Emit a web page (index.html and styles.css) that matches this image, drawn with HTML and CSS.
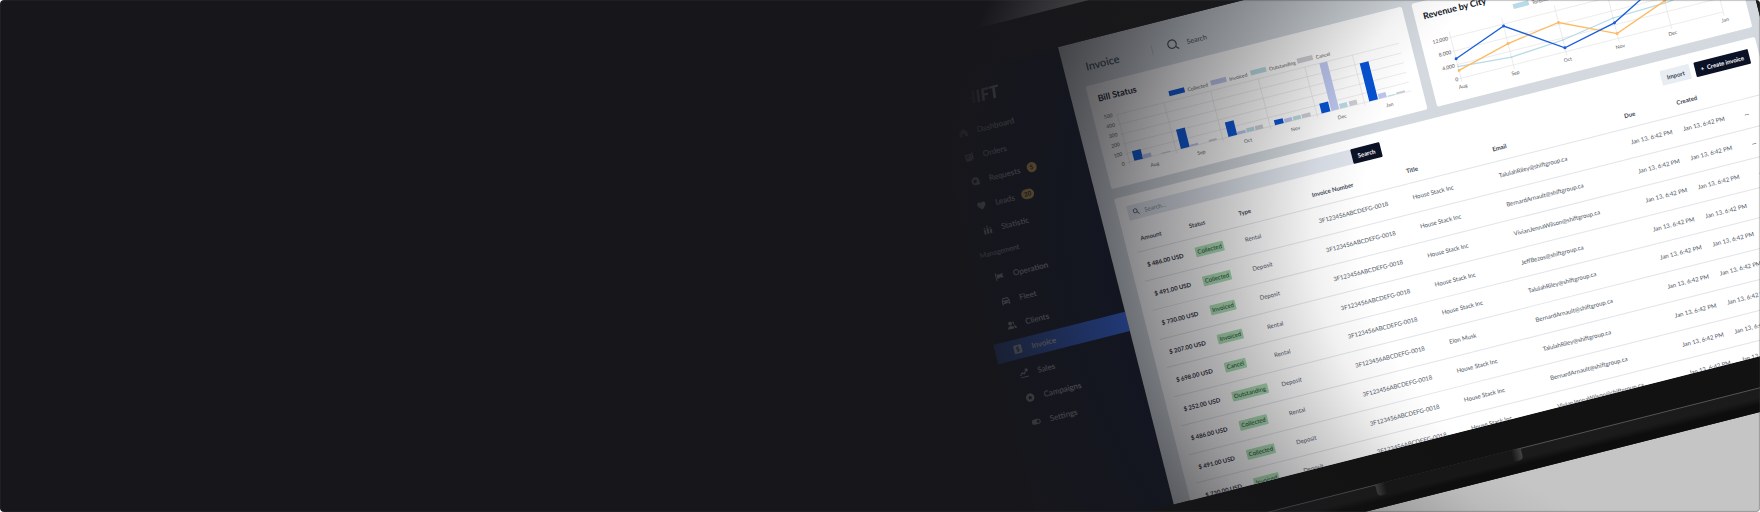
FILE: index.html
```html
<!DOCTYPE html>
<html lang="en">
<head>
<meta charset="utf-8">
<meta name="viewport" content="width=device-width, initial-scale=1">
<title>Shift – Invoice</title>
<link rel="stylesheet" href="styles.css">
</head>
<body>
<main class="hero">
  <div class="laptop">
    <div class="screen">
      <aside class="sidebar">
        <div class="logo">SHIFT</div>
        <nav class="menu" aria-label="Main">
          <a class="item" href="#dashboard"><svg class="icon" viewBox="0 0 10 10"><path d="M5 1 9 4.6V9H6.2V6.2H3.8V9H1V4.6z"/></svg>Dashboard</a>
          <a class="item" href="#orders"><svg class="icon" viewBox="0 0 10 10"><path fill-rule="evenodd" d="M1 2h6v7H1zM2.2 3.6v1h3.6v-1zM2.2 5.6v1h2.4v-1zM7.5 1H9v7H7.5z"/></svg>Orders</a>
          <a class="item" href="#requests"><svg class="icon" viewBox="0 0 10 10"><path fill-rule="evenodd" d="M5 1a4 4 0 0 1 3.6 5.8L9.2 9 7 8.5A4 4 0 1 1 5 1zM5 3a2 2 0 1 0 1.2 3.6L5 5.6l.6-.7 1.1.9A2 2 0 0 0 5 3z"/></svg>Requests<span class="badge">5</span></a>
          <a class="item" href="#leads"><svg class="icon" viewBox="0 0 10 10"><path d="M5 9C2 6.600.8 5.300.8 3.700A2.200 2.200 0 0 1 5 2.600a2.200 2.200 0 0 1 4.200 1.100C9.200 5.300 8 6.600 5 9z"/></svg>Leads<span class="badge">20</span></a>
          <a class="item" href="#statistic"><svg class="icon" viewBox="0 0 10 10"><path d="M1 4.500h2V9H1zM4 3h2v6H4zM7 5h2v4H7zM1.300 2.500h1.500v1.200H1.300zM4.300.8h1.500v1.400H4.300zM7.300 3h1.500v1.200H7.300z"/></svg>Statistic</a>
          <p class="group">Management</p>
          <a class="item" href="#operation"><svg class="icon" viewBox="0 0 10 10"><path d="M1 1h1v8H1zM2.600 2.500 5 3.200 9 2.200 8 4.500 9 7 5.500 6.300 2.600 7z"/></svg>Operation</a>
          <a class="item" href="#fleet"><svg class="icon" viewBox="0 0 10 10"><path fill-rule="evenodd" d="M2.400 2h5.200L9 5v4H7.600V8H2.400v1H1V5zM3 3 2.200 4.800h5.600L7 3zM2 6v1h1.400V6zM6.600 6v1H8V6z"/></svg>Fleet</a>
          <a class="item" href="#clients"><svg class="icon" viewBox="0 0 10 10"><circle cx="3.600" cy="3.400" r="1.900"/><path d="M.4 9c0-4 6.400-4 6.400 0zM6.400 1.600a1.900 1.900 0 0 1 0 3.600zM7.500 9h2c0-2-1-3-2.800-3.200C7.300 6.500 7.600 7.500 7.500 9z"/></svg>Clients</a>
          <a class="item active" href="#invoice" aria-current="page"><svg class="icon" viewBox="0 0 10 10"><rect x="1" y=".8" width="8" height="8.400" rx="1"/><path class="cutout" d="M6.500 3.200H4.600a.9.9 0 0 0 0 1.800h.8a.9.9 0 0 1 0 1.800H3.500M5 2.200v5.600"/></svg>Invoice</a>
          <a class="item" href="#sales"><svg class="icon" viewBox="0 0 10 10"><path d="M1 8.200h8v1H1z"/><path class="line" d="M1 6.800 3.500 4l1.600 1.500L8.600 1.500M6.400 1.400h2.300v2.200"/></svg>Sales</a>
          <a class="item" href="#campaigns"><svg class="icon" viewBox="0 0 10 10"><path fill-rule="evenodd" d="M5 .8a4.200 4.200 0 1 1 0 8.400A4.200 4.200 0 0 1 5 .8zM5 2.600 4.300 4.200 2.700 4.400l1.200 1.100-.3 1.700L5 6.400l1.400.8-.3-1.700 1.200-1.100-1.600-.2z"/></svg>Campaigns</a>
          <a class="item" href="#settings"><svg class="icon" viewBox="0 0 10 10"><path fill-rule="evenodd" d="M3 2.500h4a2.500 2.500 0 0 1 0 5H3a2.500 2.500 0 0 1 0-5zM7 3.500a1.500 1.500 0 1 0 0 3 1.500 1.500 0 0 0 0-3z"/></svg>Settings</a>
        </nav>
      </aside>

      <div class="content">
        <header class="topbar">
          <h1 class="page-title">Invoice</h1>
          <label class="top-search">
            <svg class="search-icon" viewBox="0 0 12 12"><circle cx="5.200" cy="5.200" r="4.200"/><path d="M8.300 8.300 11.200 11.200"/></svg>
            <input class="top-input" type="search" placeholder="Search" aria-label="Search">
          </label>
        </header>

        <div class="charts">
          <section class="card chart">
            <h2 class="card-title">Bill Status</h2>
            <svg class="plot" viewBox="0 0 325 82" role="img" aria-label="Bill status by month">
              <g class="legend">
                <rect class="collected" x="79" y="1" width="16" height="5"/><text x="98" y="6">Collected</text>
                <rect class="invoiced" x="122" y="1" width="16" height="5"/><text x="141" y="6">Invoiced</text>
                <rect class="outstanding" x="163" y="1" width="16" height="5"/><text x="182" y="6">Outstanding</text>
                <rect class="cancelled" x="211" y="1" width="16" height="5"/><text x="230" y="6">Cancel</text>
              </g>
              <path class="grid" d="M22 11h292M22 21h292M22 31h292M22 41h292M22 51h292M22 60h292M24 11v52M72 11v52M120 11v52M169 11v52M217 11v52M266 11v52"/>
              <g class="ylabels"><text x="19" y="12">500</text><text x="19" y="22">400</text><text x="19" y="32">300</text><text x="19" y="42">200</text><text x="19" y="52">100</text><text x="19" y="62">0</text></g>
              <path class="collected" d="M29 50h9v10h-9zM77 40h9v20h-9zM126 45h9v15h-9zM174 55h9v5h-9zM222 50h9v10h-9zM271 21h9v39h-9z"/>
              <path class="invoiced" d="M38 56h9v4h-9zM86 58h9v2h-9zM135 57h9v3h-9zM184 56h8v4h-8zM232 11h8v49h-8zM281 55h8v5h-8z"/>
              <path class="outstanding" d="M145 56h8v4h-8zM193 56h8v4h-8zM241 55h8v5h-8zM290 59h8v1h-8z"/>
              <path class="cancelled" d="M57 59h9v1h-9zM106 58h8v2h-8zM154 56h8v4h-8zM202 56h9v4h-9zM251 55h8v5h-8zM299 58h9v2h-9z"/>
              <g class="xlabels"><text x="48" y="70">Aug</text><text x="96" y="70">Sep</text><text x="144" y="70">Oct</text><text x="193" y="70">Nov</text><text x="241" y="70">Dec</text><text x="290" y="70">Jan</text></g>
            </svg>
          </section>
          <section class="card chart">
            <h2 class="card-title">Revenue by City</h2>
            <svg class="plot" viewBox="0 0 325 82" role="img" aria-label="Revenue by city">
              <g class="legend">
                <rect class="city-light" x="98" y="1" width="16" height="5"/><text x="117" y="6">Toronto</text>
                <rect class="city-warm" x="138" y="1" width="16" height="5"/>
              </g>
              <path class="grid" d="M28 18h272M28 32h272M28 46h272M28 60h272M30 12v52M84 12v52M138 12v52M192 12v52M246 12v52M300 12v52"/>
              <g class="ylabels"><text x="27" y="20">12,000</text><text x="27" y="34">8,000</text><text x="27" y="48">4,000</text><text x="27" y="62">0</text></g>
              <path class="series light" d="M30 48 84 52 138 48 192 39 248 37 300 30"/>
              <path class="series warm" d="M30 52 84 38 138 30 192 55 246 35 300 20"/>
              <path class="series strong" d="M30 40 84 20 138 56 192 44 246 16 300 6"/>
              <g class="dots strong"><circle cx="30" cy="40" r="1.500"/><circle cx="84" cy="20" r="1.500"/><circle cx="138" cy="56" r="1.500"/><circle cx="192" cy="44" r="1.500"/></g>
              <g class="dots warm"><circle cx="30" cy="52" r="1.500"/><circle cx="84" cy="38" r="1.500"/><circle cx="138" cy="30" r="1.500"/><circle cx="192" cy="55" r="1.500"/><circle cx="246" cy="35" r="1.500"/></g>
              <g class="dots light"><circle cx="30" cy="48" r="1"/><circle cx="84" cy="52" r="1"/><circle cx="138" cy="48" r="1"/><circle cx="192" cy="39" r="1"/></g>
              <g class="xlabels"><text x="30" y="70">Aug</text><text x="84" y="70">Sep</text><text x="138" y="70">Oct</text><text x="192" y="70">Nov</text><text x="246" y="70">Dec</text><text x="300" y="70">Jan</text></g>
            </svg>
          </section>
        </div>

        <section class="card list">
          <div class="toolbar">
            <label class="filter">
              <svg class="filter-icon" viewBox="0 0 12 12"><circle cx="4.600" cy="4.600" r="3.400"/><path d="M7.200 7.200 11 11"/></svg>
              <input class="filter-input" type="search" placeholder="Search..." aria-label="Search invoices">
            </label>
            <button class="button dark" type="button">Search</button>
            <button class="button light push" type="button">Import</button>
            <button class="button dark wide" type="button">+ &nbsp;Create invoice</button>
          </div>
          <table class="table">
            <colgroup><col class="c-amount"><col class="c-status"><col class="c-type"><col class="c-number"><col class="c-title"><col class="c-email"><col class="c-due"><col class="c-created"><col></colgroup>
            <thead><tr><th>Amount</th><th>Status</th><th>Type</th><th>Invoice Number</th><th>Title</th><th>Email</th><th>Due</th><th>Created</th><th></th></tr></thead>
            <tbody>
              <tr><td class="amount">$ 486.00 USD</td><td><span class="chip">Collected</span></td><td>Rental</td><td>3F123456ABCDEFG-0018</td><td>House Stack Inc</td><td>TalulahRiley@shiftgroup.ca</td><td>Jan 13, 6:42 PM</td><td>Jan 13, 6:42 PM</td><td class="more">...</td></tr>
              <tr><td class="amount">$ 491.00 USD</td><td><span class="chip">Collected</span></td><td>Deposit</td><td>3F123456ABCDEFG-0018</td><td>House Stack Inc</td><td>BernardArnault@shiftgroup.ca</td><td>Jan 13, 6:42 PM</td><td>Jan 13, 6:42 PM</td><td class="more">...</td></tr>
              <tr><td class="amount">$ 730.00 USD</td><td><span class="chip">Invoiced</span></td><td>Deposit</td><td>3F123456ABCDEFG-0018</td><td>House Stack Inc</td><td>VivianJennaWilson@shiftgroup.ca</td><td>Jan 13, 6:42 PM</td><td>Jan 13, 6:42 PM</td><td class="more">...</td></tr>
              <tr><td class="amount">$ 207.00 USD</td><td><span class="chip">Invoiced</span></td><td>Rental</td><td>3F123456ABCDEFG-0018</td><td>House Stack Inc</td><td>JeffBezos@shiftgroup.ca</td><td>Jan 13, 6:42 PM</td><td>Jan 13, 6:42 PM</td><td></td></tr>
              <tr><td class="amount">$ 698.00 USD</td><td><span class="chip">Cancel</span></td><td>Rental</td><td>3F123456ABCDEFG-0018</td><td>House Stack Inc</td><td>TalulahRiley@shiftgroup.ca</td><td>Jan 13, 6:42 PM</td><td>Jan 13, 6:42 PM</td><td></td></tr>
              <tr><td class="amount">$ 252.00 USD</td><td><span class="chip">Outstanding</span></td><td>Deposit</td><td>3F123456ABCDEFG-0018</td><td>Elon Musk</td><td>BernardArnault@shiftgroup.ca</td><td>Jan 13, 6:42 PM</td><td>Jan 13, 6:42 PM</td><td></td></tr>
              <tr><td class="amount">$ 486.00 USD</td><td><span class="chip">Collected</span></td><td>Rental</td><td>3F123456ABCDEFG-0018</td><td>House Stack Inc</td><td>TalulahRiley@shiftgroup.ca</td><td>Jan 13, 6:42 PM</td><td>Jan 13, 6:42 PM</td><td></td></tr>
              <tr><td class="amount">$ 491.00 USD</td><td><span class="chip">Collected</span></td><td>Deposit</td><td>3F123456ABCDEFG-0018</td><td>House Stack Inc</td><td>BernardArnault@shiftgroup.ca</td><td>Jan 13, 6:42 PM</td><td>Jan 13, 6:42 PM</td><td></td></tr>
              <tr><td class="amount">$ 730.00 USD</td><td><span class="chip">Invoiced</span></td><td>Deposit</td><td>3F123456ABCDEFG-0018</td><td>House Stack Inc</td><td>VivianJennaWilson@shiftgroup.ca</td><td>Jan 13, 6:42 PM</td><td>Jan 13, 6:42 PM</td><td></td></tr>
            </tbody>
          </table>
        </section>
      </div>
    </div>
    <div class="base"><div class="notch"></div></div>
  </div>
  <div class="shade"></div>
</main>
</body>
</html>
```

FILE: styles.css
```css
* { box-sizing: border-box; }

body {
  margin: 0;
  background: #fff;
  font-family: Lato, "Noto Sans", sans-serif;
}

.hero {
  position: relative;
  min-height: 100vh;
  overflow: hidden;
  border-radius: 4px;
  background: #c5c5c5;
}

/* The laptop is a tilted object lying on the dark backdrop. */
.laptop {
  position: absolute;
  top: 9px;
  right: -16px;
  width: 944px;
  padding-top: 38px;
  background: linear-gradient(#1b1b1c, #121212 90%);
  transform: rotate(-14.2deg);
  transform-origin: 226px 38px;
}

.shade {
  position: absolute;
  inset: 0;
  border-radius: 4px;
  background: radial-gradient(ellipse 830px 664px at 100% 44%,
    rgba(23, 23, 27, 0) 48%,
    rgba(23, 23, 27, .06) 54%,
    rgba(23, 23, 27, .2) 61%,
    rgba(23, 23, 27, .34) 68%,
    rgba(23, 23, 27, .46) 74%,
    rgba(23, 23, 27, .6) 80%,
    rgba(23, 23, 27, .74) 87%,
    rgba(23, 23, 27, .86) 93%,
    #17171b 99%);
  box-shadow: inset 0 0 1px 1px rgba(60, 60, 64, .3);
  pointer-events: none;
}

.screen {
  display: flex;
  height: 472px;
  margin: 0 30px 0 90px;
  overflow: hidden;
}

/* Sidebar */
.sidebar {
  flex: 0 0 136px;
  padding-top: 16px;
  background: #0e1428;
  color: #d8dce6;
}

.logo {
  width: 70px;
  height: 34px;
  padding-left: 23px;
  color: #fff;
  font-size: 17px;
  font-style: italic;
  font-weight: 900;
  line-height: 24px;
  mask-image: linear-gradient(90deg, transparent 50%, #000 70%);
}

.menu {
  display: flex;
  flex-direction: column;
  gap: 5px;
}

.item {
  display: flex;
  align-items: center;
  height: 20px;
  padding-left: 18px;
  color: inherit;
  font-size: 8px;
  font-weight: 500;
  text-decoration: none;
}

.active { background: #2d62e6; color: #fff; }

.icon {
  width: 10px;
  height: 10px;
  margin-right: 9px;
  fill: currentColor;
}

.icon .line { fill: none; stroke: currentColor; stroke-width: 1.2; }
.icon .cutout { fill: none; stroke: #2d62e6; stroke-width: 1; }

.badge {
  min-width: 10px;
  height: 10px;
  margin-left: 7px;
  padding: 0 3px;
  border-radius: 5px;
  background: #ffc860;
  color: #111;
  font-size: 6px;
  font-weight: 700;
  line-height: 10px;
}

.group {
  height: 18px;
  margin: 0;
  padding-left: 9px;
  font-size: 7px;
  line-height: 16px;
}

/* Main area */
.content {
  display: flex;
  flex: 1;
  flex-direction: column;
  gap: 10px;
  min-width: 0;
  padding: 0 10px 0 17px;
  background: #d3d9de;
  color: #4b5462;
}

.topbar {
  display: flex;
  flex: 0 0 35px;
  align-items: center;
  padding: 16px 0 0 5px;
}

.page-title {
  width: 69px;
  margin: 0;
  border-right: 1px solid #b9bec4;
  color: #2c333e;
  font-size: 11px;
  font-weight: 500;
  line-height: 10px;
}

.top-search { display: flex; align-items: center; padding-left: 15px; }

.search-icon {
  width: 12px;
  height: 12px;
  margin-right: 8px;
  fill: none;
  stroke: #3d4653;
  stroke-width: 1.2;
}

.top-input, .filter-input {
  flex: 1;
  min-width: 0;
  padding: 0;
  border: 0;
  background: none;
  color: inherit;
  font: inherit;
  outline: 0;
}

.top-input { width: 60px; font-size: 7px; }
.top-input::placeholder { color: #3d4653; }
.filter-input::placeholder { color: #7c8590; }

.charts {
  display: grid;
  flex: 0 0 106px;
  grid-template-columns: 1fr 1fr;
  gap: 10px;
}

.card { border-radius: 2px; background: #fff; }
.chart { padding-top: 10px; }

.card-title {
  height: 14px;
  margin: 0;
  padding-left: 9px;
  color: #0c111b;
  font-size: 9px;
  font-weight: 700;
  line-height: 10px;
}

.plot { display: block; width: 100%; font-size: 5px; fill: #555; }
.grid { fill: none; stroke: #ddd; stroke-width: .5; }
.ylabels { text-anchor: end; }
.xlabels { text-anchor: middle; }
.collected { fill: #0552d3; }
.invoiced { fill: #bcc6ee; }
.outstanding { fill: #b9dae4; }
.cancelled { fill: #cdced4; }
.city-light { fill: #b9dbe7; }
.city-warm { fill: #fdbb64; }
.series { fill: none; stroke-width: 1.3; }
.series.light { stroke: #b9dbe7; }
.series.warm { stroke: #fdbb64; }
.series.strong { stroke: #1a5fdc; }
.dots.light { fill: #b9dbe7; }
.dots.warm { fill: #fdbb64; }
.dots.strong { fill: #1a5fdc; }

/* Invoice list */
.list { flex: 1; padding: 10px; }
.toolbar { display: flex; align-items: stretch; height: 15px; }

.filter {
  display: flex;
  align-items: center;
  width: 231px;
  padding-left: 5px;
  background: #dfe4ec;
  color: #3d4653;
  font-size: 6px;
}

.filter-icon {
  width: 7px;
  height: 7px;
  margin-right: 5px;
  fill: none;
  stroke: #3d4653;
  stroke-width: 1.4;
}

.button {
  width: 30px;
  padding: 0;
  border: 0;
  border-radius: 1px;
  font-family: inherit;
  font-size: 6px;
  font-weight: 700;
}

.button.dark { background: #0b1226; color: #fff; }
.button.light { background: #e8edf3; color: #3d4653; }
.push { margin-left: auto; }
.wide { margin-left: 5px; }
.button.wide { width: 56px; }

.table {
  width: 100%;
  margin-top: 8px;
  border-collapse: collapse;
  font-size: 6px;
  line-height: 8px;
  table-layout: fixed;
}

.c-amount { width: 56px; }
.c-status { width: 51px; }
.c-type { width: 76px; }
.c-number { width: 97px; }
.c-title { width: 89px; }
.c-email { width: 136px; }
.c-due { width: 54px; }
.c-created { width: 63px; }

.table tr { height: 30px; border-bottom: 1px solid #e2e4e7; }
.table thead tr { height: 24px; }
.table tbody tr:nth-child(4n) { height: 29px; }

.table th, .table td {
  padding: 0;
  text-align: left;
  white-space: nowrap;
}

.table th { color: #3d4653; font-weight: 700; }
.table th:first-child, .table td:first-child { padding-left: 6px; }
.table .amount { color: #1c2230; font-weight: 700; }
.table .more { color: #1c2230; font-weight: 700; }

.chip {
  display: inline-block;
  padding: 1px 2px;
  border-radius: 1px;
  background: #a9dcb0;
  color: #1c4230;
}

/* Keyboard-side edge of the laptop */
.base {
  display: flex;
  height: 24px;
  margin-top: 30px;
  padding-left: 426px;
  border-top: 1px solid #555;
  background: linear-gradient(#1b1b1b 40%, #0d0d0d 70%);
}

.notch {
  width: 150px;
  height: 12px;
  margin-top: -1px;
  border-radius: 0 0 4px 4px;
  background: linear-gradient(90deg, #444, #171717 10px, #171717 140px, #444);
}
```
